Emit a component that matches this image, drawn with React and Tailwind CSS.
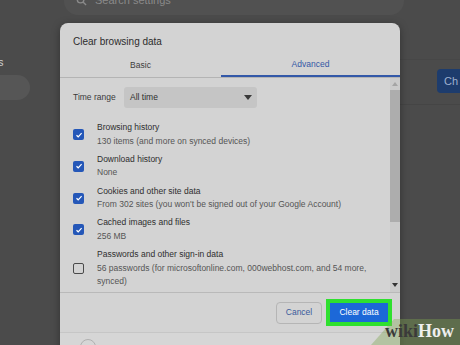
export default function App() {
  const items = [
    { checked: true, title: "Browsing history", lines: ["130 items (and more on synced devices)"] },
    { checked: true, title: "Download history", lines: ["None"] },
    { checked: true, title: "Cookies and other site data", lines: ["From 302 sites (you won't be signed out of your Google Account)"] },
    { checked: true, title: "Cached images and files", lines: ["256 MB"] },
    { checked: false, title: "Passwords and other sign-in data", lines: ["56 passwords (for microsoftonline.com, 000webhost.com, and 54 more,", "synced)"] },
  ];
  return (
    <div className="relative w-[460px] h-[345px] overflow-hidden bg-[#4b4b4b] font-['Liberation_Sans',Arial,sans-serif]">
      {/* background page */}
      <div className="pl-[64px]">
        <div className="h-[15px] w-[340px] rounded-b-[14px] bg-[#515151] overflow-hidden">
          <div className="-mt-[7px] flex items-center gap-[8px] pl-[12px] text-[11px] leading-[14px] text-[#8a8a8a]">
            <svg width="11" height="11" viewBox="0 0 12 12" fill="none" stroke="#8a8a8a" strokeWidth="1.5">
              <circle cx="5" cy="5" r="3.6" />
              <path d="M7.6 7.6L11 11" />
            </svg>
            <span>Search settings</span>
          </div>
        </div>
      </div>
      <div className="flex">
        <div className="w-[60px] pt-[41px]">
          <div className="text-[11px] leading-[12px] text-[#cfcfcf] -ml-[2px]">s</div>
          <div className="mt-[7px] h-[25px] w-[30px] rounded-r-full bg-[#565656]" />
        </div>
        <div className="flex-1" />
        <div className="w-[60px]">
          <div className="mt-[44px] border-t border-[#474747]" />
          <div className="mt-[9px] ml-[37px] h-[24px] rounded-l-[4px] bg-[#1d3c6d] flex items-center pl-[7px] text-[11px] text-[#9fb1cf]">
            Ch
          </div>
          <div className="mt-[11px] border-t border-[#454545]" />
        </div>
      </div>

      {/* dialog */}
      <div className="absolute left-[60px] top-[23px] w-[340px] h-[340px] rounded-t-[8px] bg-[#d3d3d3] shadow-[0_2px_8px_rgba(0,0,0,0.35)] flex flex-col">
        <div className="pl-[13px] pt-[12px] text-[10px] leading-[14px] text-[#2c2c2c]">Clear browsing data</div>
        <div className="flex h-[28px] text-[8.5px]">
          <div className="w-[161px] flex items-center justify-center pt-[4px] text-[#3d3d3d]">Basic</div>
          <div className="flex-1 flex items-center justify-center pt-[4px] text-[#3457a5] border-b-2 border-[#3358a8]">Advanced</div>
        </div>
        <div className="border-t border-[#b4b4b4]" />
        <div className="flex h-[214px]">
          <div className="flex-1 overflow-hidden pl-[13px] pt-[9px]">
            <div className="flex items-center h-[21px]">
              <div className="w-[51px] text-[8.5px] text-[#3a3a3a]">Time range</div>
              <div className="w-[133px] h-[21px] rounded-[3px] bg-[#c5c5c5] flex items-center justify-between pl-[6px] pr-[5px] text-[8.5px] text-[#2e2e2e]">
                <span>All time</span>
                <svg width="8" height="5" viewBox="0 0 8 5"><path d="M0 0H8L4 5Z" fill="#3a3a3a" /></svg>
              </div>
            </div>
            <div className="mt-[13px] flex flex-col gap-[4.75px]">
              {items.map((it) => (
                <div key={it.title} className="flex items-center">
                  {it.checked ? (
                    <div className="w-[11px] h-[11px] rounded-[2px] bg-[#2457b8] flex items-center justify-center shrink-0">
                      <svg width="8" height="8" viewBox="0 0 8 8" fill="none" stroke="#fff" strokeWidth="1.2">
                        <path d="M1.5 4.2L3.2 5.8L6.6 2.2" />
                      </svg>
                    </div>
                  ) : (
                    <div className="w-[11px] h-[11px] rounded-[2px] border-[1.5px] border-[#4a4a4a] shrink-0" />
                  )}
                  <div className="ml-[13px] text-[8.5px] leading-[13.5px]">
                    <div className="text-[#2e2e2e]">{it.title}</div>
                    {it.lines.map((l) => (
                      <div key={l} className="text-[#555555] whitespace-nowrap">{l}</div>
                    ))}
                  </div>
                </div>
              ))}
            </div>
          </div>
          <div className="w-[10px] bg-[#cbcbcb] flex flex-col">
            <div className="h-[12px] flex items-center justify-center">
              <svg width="6" height="4" viewBox="0 0 6 4"><path d="M0 4H6L3 0Z" fill="#a5a5a5" /></svg>
            </div>
            <div className="h-[132px] bg-[#adadad]" />
            <div className="flex-1" />
            <div className="h-[14px] flex items-center justify-center">
              <svg width="6" height="4" viewBox="0 0 6 4"><path d="M0 0H6L3 4Z" fill="#333" /></svg>
            </div>
          </div>
        </div>
        <div className="border-t border-[#b9b9b9] h-[40px] flex items-center justify-end pr-[8px] gap-[4px]">
          <div className="w-[46px] h-[22px] rounded-[4px] border border-[#b5b5b5] flex items-center justify-center text-[8.5px] text-[#3a5b9c]">
            Cancel
          </div>
          <div className="w-[66px] h-[27px] border-[4px] border-[#2fe02f] bg-[#1c68d8] flex items-center justify-center text-[8.5px] text-white">
            Clear data
          </div>
        </div>
        <div className="flex-1 border-t border-[#c6c6c6] bg-[#d6d6d6] pl-[20px] pt-[6px]">
          <div className="w-[16px] h-[16px] rounded-full border border-[#b0b0b0]" />
        </div>
      </div>

      {/* watermark */}
      <svg className="absolute left-0 top-0" width="460" height="345" viewBox="0 0 460 345">
        <path d="M371 345L394 319H460V345Z" fill="rgba(125,165,80,0.38)" />
      </svg>
      <div className="absolute left-[385px] top-[321px] font-['Liberation_Serif',serif] font-bold text-[18px] leading-[20px]">
        <span className="text-[#3a3a3a]">wiki</span>
        <span className="text-[#efefef]">How</span>
      </div>
    </div>
  );
}
